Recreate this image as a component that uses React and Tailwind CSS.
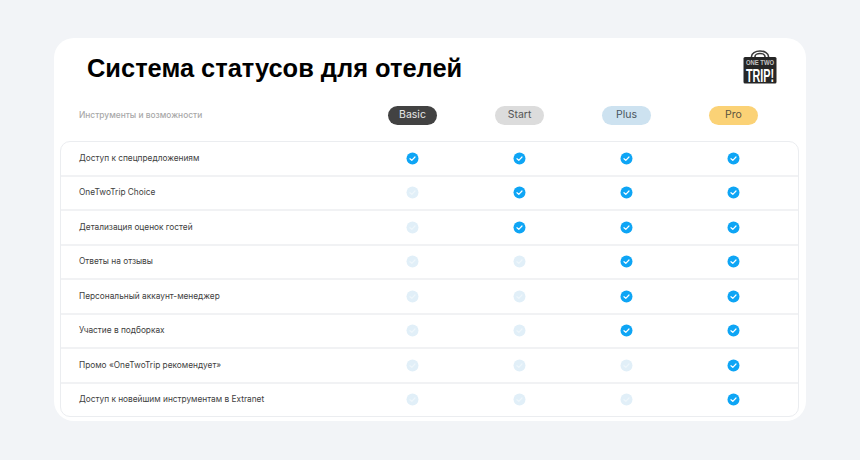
const rows = [
  ["Доступ к спецпредложениям", 4],
  ["OneTwoTrip Choice", 3],
  ["Детализация оценок гостей", 3],
  ["Ответы на отзывы", 2],
  ["Персональный аккаунт-менеджер", 2],
  ["Участие в подборках", 2],
  ["Промо «OneTwoTrip рекомендует»", 1],
  ["Доступ к новейшим инструментам в Extranet", 1],
];
const pills = [
  ["Basic", "bg-[#424242] text-[#e8e8e8]"],
  ["Start", "bg-[#dcdcdc] text-[#555555]"],
  ["Plus", "bg-[#cde2f0] text-[#4a5560]"],
  ["Pro", "bg-[#fbd276] text-[#5c5440]"],
];

function Check({ on }) {
  return (
    <svg width="13" height="13" viewBox="0 0 13 13" className="block">
      <circle cx="6.5" cy="6.5" r="6" fill={on ? "#0ea5f5" : "#e1eff8"} />
      <path d="M4 6.7 5.8 8.4 9 5" fill="none" stroke={on ? "#ffffff" : "#eef6fb"} strokeWidth="1.2" strokeLinecap="round" strokeLinejoin="round" />
    </svg>
  );
}

function Logo() {
  return (
    <svg width="34" height="38" viewBox="0 0 34 38" className="block">
      <path d="M8.5 8V6.5a8.5 5.5 0 0 1 17 0V8" fill="none" stroke="#3a3a3a" strokeWidth="1.6" />
      <path d="M12 8V6.5a5 3 0 0 1 10 0V8" fill="none" stroke="#3a3a3a" strokeWidth="1.6" />
      <rect x="0.5" y="7" width="33" height="26.5" rx="1.5" fill="#262626" />
      <text transform="translate(17 14.5) scale(0.8 1)" textAnchor="middle" fill="#c4c4c4" fontSize="7.4" fontWeight="700" fontFamily="'Liberation Sans', sans-serif">ONE TWO</text>
      <text transform="translate(17 31.5) scale(0.6 1)" textAnchor="middle" fill="#ffffff" fontSize="18" fontWeight="700" fontFamily="'Liberation Sans', sans-serif">TRIP!</text>
    </svg>
  );
}

export default function App() {
  return (
    <div className="w-[860px] h-[460px] bg-[#f2f4f7] pt-[38px] pl-[54px] font-['Inter',sans-serif]">
      <div className="w-[752px] h-[383px] bg-white rounded-[20px] px-[6px] flex flex-col">
        <div className="h-[58px] flex items-center justify-between pl-[27px] pr-[23.5px] pt-[2px]">
          <h1 className="pt-[2px] text-[25.45px] leading-none font-bold text-black font-['Liberation_Sans',sans-serif]">Система статусов для отелей</h1>
          <div className="pt-[2px]"><Logo /></div>
        </div>
        <div className="h-[45px] pb-[7px] grid grid-cols-[299px_repeat(4,107px)] items-center">
          <span className="pl-[19px] text-[8.4px] font-medium text-[#a8a8a8]">Инструменты и возможности</span>
          {pills.map(([t, c]) => (
            <div key={t} className="flex justify-center">
              <span className={`w-[49px] h-[19px] rounded-full flex items-center justify-center text-[10.5px] ${c}`}>{t}</span>
            </div>
          ))}
        </div>
        <div className="w-[739px] h-[276px] border border-[#ebedf0] rounded-[10px] flex flex-col">
          {rows.map(([label, n], i) => (
            <div key={label} className={`flex-1 grid grid-cols-[298px_repeat(4,107px)] items-center ${i ? "border-t-2 border-[#f1f2f4]" : ""}`}>
              <span className="pl-[18px] pb-[1px] text-[8.3px] text-[#404040] whitespace-nowrap">{label}</span>
              {[0, 1, 2, 3].map((c) => (
                <div key={c} className="flex justify-center">
                  <Check on={c >= 4 - n} />
                </div>
              ))}
            </div>
          ))}
        </div>
      </div>
    </div>
  );
}
